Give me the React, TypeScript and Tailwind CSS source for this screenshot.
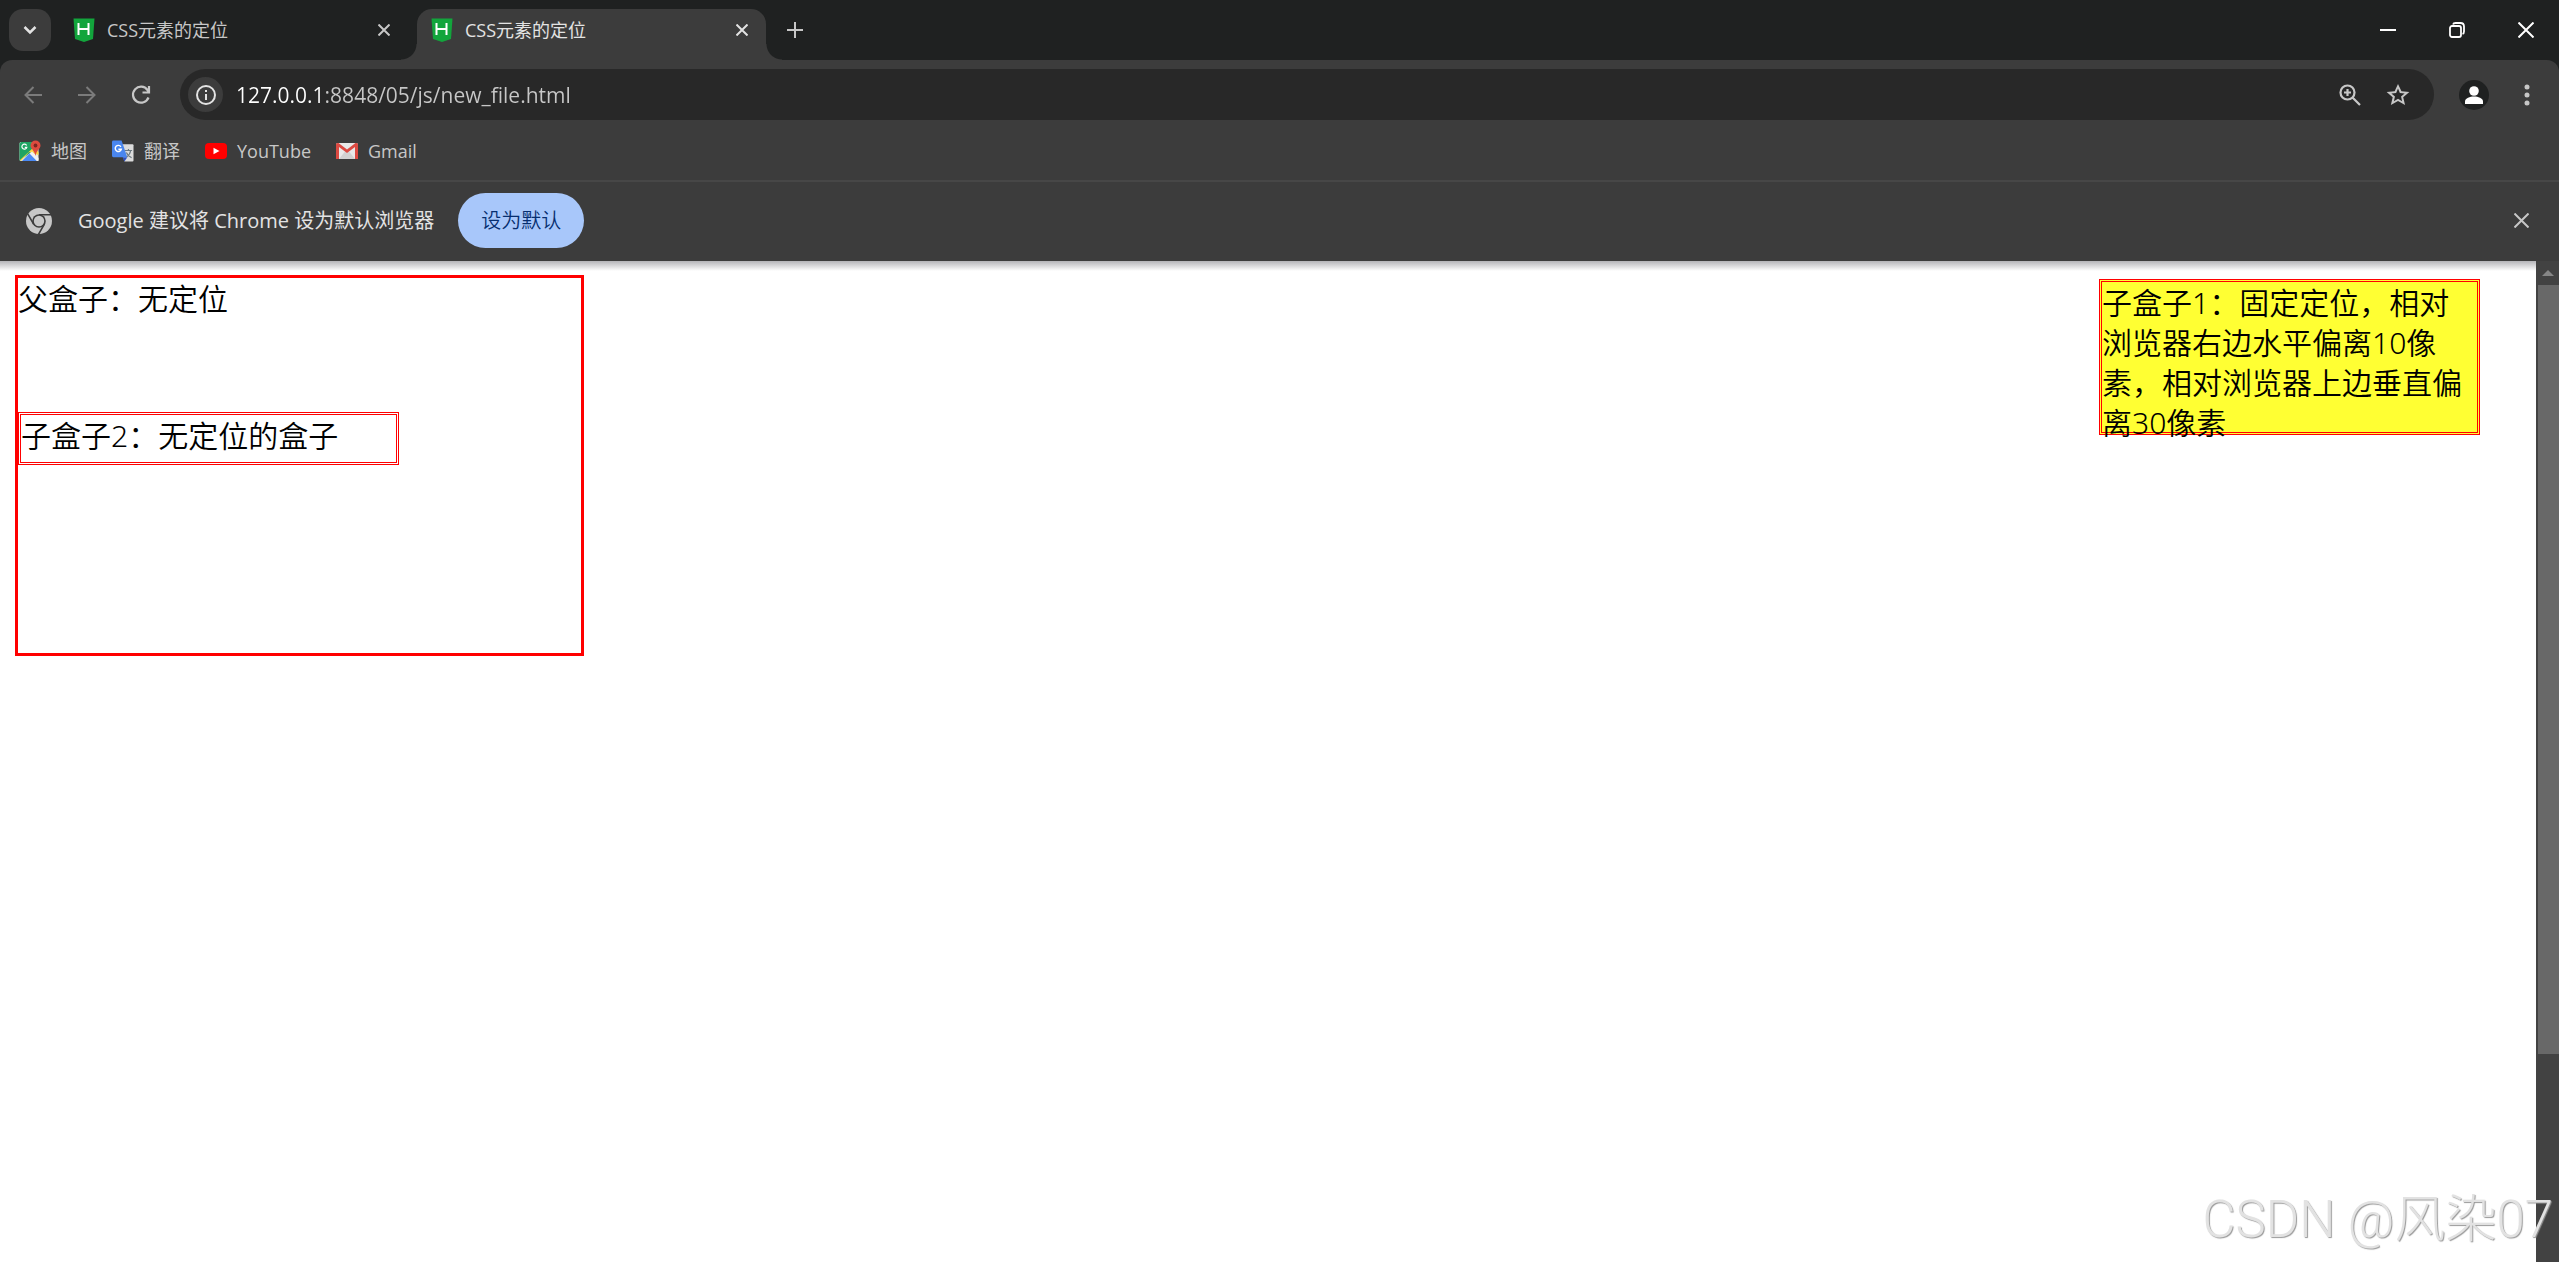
import { useState } from "react";
import type { ReactNode } from "react";

const TABS = [
  { id: "first", title: "CSS元素的定位" },
  { id: "second", title: "CSS元素的定位" },
];

const BOOKMARKS = [
  { label: "地图", icon: <MapsIcon /> },
  { label: "翻译", icon: <TranslateIcon /> },
  { label: "YouTube", icon: <YouTubeIcon /> },
  { label: "Gmail", icon: <GmailIcon /> },
];

function HBuilderIcon() {
  return (
    <svg width="22" height="24" viewBox="0 0 22 24">
      <path d="M0.500 0.500H21.500L20 21L11 24L2 21Z" fill="#12a53c" />
      <path d="M5.500 5V17M15.500 5V17M5.500 11H15.500" stroke="#fff" strokeWidth="2" />
    </svg>
  );
}

function MapsIcon() {
  return (
    <svg width="22" height="24" viewBox="0 0 22 24">
      <rect x="0.500" y="3" width="19" height="19" rx="1.500" fill="#e8e8e8" />
      <path d="M2 3H14L15 11L1 21.500H0.500V4.500Z" fill="#1fa463" />
      <path d="M1 21L15 8L19.500 13V16L10 13L2 22Z" fill="#fdd643" />
      <path d="M3 22L10.500 14.500L18 22Z" fill="#4a89f3" />
      <path d="M11 14.500L13 12.500L19.500 19V22H18Z" fill="#f1f1f1" />
      <path d="M7.600 6.500A2.500 2.500 0 1 0 7.800 8.300H5.800" fill="none" stroke="#fff" strokeWidth="1.200" />
      <path d="M16.500 1.500A5 5 0 0 0 11.500 6.500C11.500 10 15.500 11 16.500 17C17.500 11 21.500 10 21.500 6.500A5 5 0 0 0 16.500 1.500Z" fill="#de4b3e" />
      <circle cx="16.500" cy="6.500" r="1.900" fill="#7d2621" />
    </svg>
  );
}

function TranslateIcon() {
  return (
    <svg width="22" height="24" viewBox="0 0 23 24">
      <path d="M8 5H21.500A1 1 0 0 1 22.500 6V22A1 1 0 0 1 21.500 23H13Z" fill="#dcdcdc" />
      <path d="M11 18.500H16L13 23Z" fill="#2d4fc0" />
      <path d="M1.500 1H10L16 18.500H1.500A1.500 1.500 0 0 1 0 17V2.500A1.500 1.500 0 0 1 1.500 1Z" fill="#4a86ee" />
      <path d="M9.300 7.600A3.200 3.200 0 1 0 9.700 10.200H6.700" fill="none" stroke="#fff" strokeWidth="1.500" />
      <path d="M13.500 11.500H21M17.200 10V11.500M19.500 11.500C19 15 17 17 15.500 18M15 13.500C16 16 18.500 18 20.500 19" fill="none" stroke="#6b7880" strokeWidth="1.200" />
    </svg>
  );
}

function YouTubeIcon() {
  return (
    <svg width="22" height="24" viewBox="0 0 22 24">
      <rect y="4" width="22" height="16" rx="4" fill="#f00" />
      <path d="M8.500 8.800L14.500 12L8.500 15.200Z" fill="#fff" />
    </svg>
  );
}

function GmailIcon() {
  return (
    <svg width="22" height="24" viewBox="0 0 22 24">
      <rect y="4" width="22" height="16" rx="1.500" fill="#e9e9e9" />
      <path d="M3 20L9 12.500L11 14L13 12.500L19 20Z" fill="#d2d2d2" />
      <path d="M0 20V5.500Q0 4 1.500 4H2.500L11 10.500L19.500 4H20.500Q22 4 22 5.500V20H19V8L11 14L3 8V20Z" fill="#dc4a42" />
    </svg>
  );
}

function ChromeIcon() {
  return (
    <svg width="26" height="26" viewBox="0 0 26 26">
      <circle cx="13" cy="13" r="13" fill="#c7c7c7" />
      <circle cx="13" cy="13" r="6.800" fill="#3c3c3c" />
      <path
        d="M13 6.800H25M18.400 16.100L12.400 26.500M7.600 16.100L1.600 5.700"
        stroke="#3c3c3c"
        strokeWidth="1.600"
      />
      <circle cx="13" cy="13" r="5.200" fill="#c7c7c7" />
    </svg>
  );
}

function CloseIcon({ size = 12, width = 2 }: { size?: number; width?: number }) {
  return (
    <svg width={size} height={size} viewBox={`0 0 ${size} ${size}`} stroke="currentColor" strokeWidth={width}>
      <path d={`M0.500 0.500L${size - 0.5} ${size - 0.5}M${size - 0.5} 0.500L0.500 ${size - 0.5}`} />
    </svg>
  );
}

function IconButton({ label, className, children }: { label: string; className?: string; children: ReactNode }) {
  return (
    <button
      type="button"
      aria-label={label}
      className={`flex shrink-0 items-center justify-center rounded-full ${className ?? ""}`}
    >
      {children}
    </button>
  );
}

function TabStrip() {
  const [active, setActive] = useState("second");

  return (
    <header className="flex h-[60px] bg-[#1f2121] pl-[9px] pt-[9px]">
      <button
        type="button"
        aria-label="搜索标签页"
        className="flex size-[42px] items-center justify-center rounded-[14px] bg-[#3c3c3c] text-[#e3e3e3]"
      >
        <svg width="14" height="10" viewBox="0 0 14 10" fill="none" stroke="currentColor" strokeWidth="2.500">
          <path d="M1.500 2L7 7.500L12.500 2" />
        </svg>
      </button>

      <div className="ml-2 flex gap-[9px]">
        {TABS.map((tab) => {
          const selected = tab.id === active;
          return (
            <div
              key={tab.id}
              className={
                selected
                  ? "relative flex w-[349px] rounded-t-[15px] bg-[#3c3c3c] pb-[9px] pl-[14px] pr-2 text-[#e3e3e3]"
                  : "relative flex w-[349px] pb-[9px] pl-[14px] pr-2 text-[#c7c7c7]"
              }
            >
              {selected && (
                <>
                  {/* flared feet of the selected tab */}
                  <span className="absolute -left-4 bottom-0 size-4 bg-[radial-gradient(circle_at_0_0,#1f2121_15px,#3c3c3c_16px)]" />
                  <span className="absolute -right-4 bottom-0 size-4 bg-[radial-gradient(circle_at_100%_0,#1f2121_15px,#3c3c3c_16px)]" />
                </>
              )}
              <button
                type="button"
                onClick={() => setActive(tab.id)}
                className="flex flex-1 items-center gap-3 text-left text-[18px] leading-6"
              >
                <HBuilderIcon />
                <span>{tab.title}</span>
              </button>
              <IconButton label="关闭标签页" className="w-8">
                <CloseIcon />
              </IconButton>
            </div>
          );
        })}
      </div>

      <IconButton label="打开新的标签页" className="ml-2 size-[42px] text-[#c7c7c7]">
        <svg width="16" height="16" viewBox="0 0 16 16" stroke="currentColor" strokeWidth="2">
          <path d="M8 0V16M0 8H16" />
        </svg>
      </IconButton>

      <div className="ml-auto flex gap-[3px] pb-[10px] text-white">
        <IconButton label="最小化" className="w-[66px]">
          <svg width="16" height="16" viewBox="0 0 16 16" stroke="currentColor" strokeWidth="2">
            <path d="M0 8H16" />
          </svg>
        </IconButton>
        <IconButton label="还原" className="w-[66px]">
          <svg width="16" height="16" viewBox="0 0 16 16" fill="none" stroke="currentColor" strokeWidth="1.800">
            <rect x="1" y="4" width="11" height="11" rx="2" />
            <path d="M4 2.500Q4.500 1 6.500 1H11.500Q15 1 15 4.500V9.500Q15 11.500 13.500 12" />
          </svg>
        </IconButton>
        <IconButton label="关闭" className="w-[66px]">
          <CloseIcon size={16} />
        </IconButton>
      </div>
    </header>
  );
}

function Toolbar() {
  return (
    <div className="bg-[#1f2121]">
      <div className="flex items-center rounded-t-xl bg-[#3c3c3c] pb-[9px] pl-[9px] pr-[11px] pt-[9px]">
        <nav className="flex gap-[6px] text-[#7b7b7b]">
          <IconButton label="后退" className="size-12">
            <svg width="18" height="18" viewBox="0 0 18 18" fill="none" stroke="currentColor" strokeWidth="2">
              <path d="M18 9H2M9.500 1L1.500 9L9.500 17" />
            </svg>
          </IconButton>
          <IconButton label="前进" className="size-12">
            <svg width="18" height="18" viewBox="0 0 18 18" fill="none" stroke="currentColor" strokeWidth="2">
              <path d="M0 9H16M8.500 1L16.500 9L8.500 17" />
            </svg>
          </IconButton>
          <IconButton label="重新加载" className="size-12 text-[#c7c7c7]">
            <svg width="20" height="20" viewBox="0 0 20 20" fill="none" stroke="currentColor" strokeWidth="2.200">
              <path d="M17.500 12.500A8 8 0 1 1 16.500 5L18 7M18 1V7.500H11.500" />
            </svg>
          </IconButton>
        </nav>

        <form className="ml-[15px] flex h-[51px] flex-1 items-center rounded-full bg-[#282828] pl-2 pr-3 text-[#c7c7c7]">
          <IconButton label="查看网站信息" className="size-[35px] bg-[#3c3c3c] text-[#e3e3e3]">
            <svg width="20" height="20" viewBox="0 0 20 20" fill="none" stroke="currentColor" strokeWidth="2">
              <circle cx="10" cy="10" r="9" />
              <path d="M10 9V15M10 5V7" />
            </svg>
          </IconButton>
          <input
            type="text"
            aria-label="地址和搜索栏"
            defaultValue="127.0.0.1:8848/05/js/new_file.html"
            className="ml-[13px] h-8 flex-1 bg-[linear-gradient(90deg,#ffffff_89px,#c7c7c7_89px)] bg-clip-text text-[21px] text-transparent outline-none"
          />
          <IconButton label="缩放" className="size-12">
            <svg width="22" height="22" viewBox="0 0 22 22" fill="none" stroke="currentColor" strokeWidth="2.200">
              <circle cx="8.500" cy="8.500" r="7" />
              <path d="M13.500 13.500L21 21M8.500 5V12M5 8.500H12" />
            </svg>
          </IconButton>
          <IconButton label="为此标签页添加书签" className="size-12">
            <svg width="26" height="26" viewBox="0 0 24 24" fill="currentColor">
              <path d="M22.500 9.200l-7.300-.6L12 1.800 8.900 8.600l-7.400.6 5.600 4.800-1.700 7.300L12 17.500l6.500 3.800-1.700-7.200 5.700-4.900zM12 15.400l-3.800 2.300 1-4.300-3.300-2.900 4.400-.4L12 6.100l1.700 4 4.400.4-3.300 2.900 1 4.300L12 15.400z" />
            </svg>
          </IconButton>
        </form>

        <IconButton label="个人资料" className="ml-[25px] size-[30px] bg-[#1f2121] text-white">
          <svg width="18" height="18" viewBox="0 0 18 18" fill="currentColor">
            <circle cx="9" cy="5" r="4.800" />
            <path d="M0 18V15.500C0 12 5 10.500 9 10.500S18 12 18 15.500V18Z" />
          </svg>
        </IconButton>
        <IconButton label="自定义及控制" className="ml-4 h-12 w-[43px] text-[#c7c7c7]">
          <svg width="6" height="22" viewBox="0 0 6 22" fill="currentColor">
            <circle cx="3" cy="3" r="2.500" />
            <circle cx="3" cy="11" r="2.500" />
            <circle cx="3" cy="19" r="2.500" />
          </svg>
        </IconButton>
      </div>
    </div>
  );
}

function BookmarksBar() {
  return (
    <nav aria-label="书签" className="flex h-[53px] items-center gap-[25px] border-b-2 border-[#474747] bg-[#3c3c3c] pb-2 pl-[19px] text-[#c7c7c7]">
      {BOOKMARKS.map((b) => (
        <a key={b.label} href="#" className="flex items-center gap-[10px] text-[18px] leading-6">
          {b.icon}
          {b.label}
        </a>
      ))}
    </nav>
  );
}

function DefaultBrowserBar() {
  const [open, setOpen] = useState(true);
  if (!open) return null;

  return (
    <div className="flex h-[79px] items-center bg-[#3c3c3c] pb-[2px] pl-[26px] pr-[30px] text-[20px] leading-7 text-[#e3e3e3]">
      <ChromeIcon />
      <p className="ml-[26px]">Google 建议将 Chrome 设为默认浏览器</p>
      <button type="button" className="ml-6 h-[55px] rounded-full bg-[#a8c7fa] px-[23px] font-[350] text-[#062e6f]">
        设为默认
      </button>
      <button type="button" aria-label="关闭" onClick={() => setOpen(false)} className="ml-auto text-[#c7c7c7]">
        <CloseIcon size={15} />
      </button>
    </div>
  );
}

function Page() {
  return (
    <main className="flex flex-1 items-start justify-between bg-white bg-[linear-gradient(#b4b4b8,#ffffff_10px)] pl-[15px] pr-14 pt-[14px] font-['Noto_Sans','Noto_Sans_CJK_SC',sans-serif] text-[30px] font-[350] leading-10 text-black">
      <section className="h-[381px] w-[569px] border-3 border-[#ff0000]">
        <p className="pt-px">父盒子：无定位</p>
        <div className="mt-[93px] h-[53px] w-[381px] border-3 border-double border-[#ff0000] pt-px">
          子盒子2：无定位的盒子
        </div>
      </section>
      <aside className="mt-1 h-[156px] w-[381px] border-3 border-double border-[#ff0000] bg-[#ffff33] pt-px">
        子盒子1：固定定位，相对浏览器右边水平偏离10像素，相对浏览器上边垂直偏离30像素
      </aside>
    </main>
  );
}

function Scrollbar() {
  return (
    <div className="flex w-[23px] flex-col bg-[#424242]">
      <div className="flex h-6 items-center justify-center">
        <svg width="12" height="6" viewBox="0 0 12 6" fill="#868686">
          <path d="M6 0L12 6H0Z" />
        </svg>
      </div>
      <div className="ml-[2px] h-[769px] bg-[#686868]" />
    </div>
  );
}

export default function App() {
  return (
    <div className="relative flex min-h-screen flex-col overflow-hidden font-['Open_Sans','Noto_Sans_CJK_SC',sans-serif]">
      <TabStrip />
      <Toolbar />
      <BookmarksBar />
      <DefaultBrowserBar />
      <div className="flex flex-1">
        <Page />
        <Scrollbar />
      </div>
      <p className="pointer-events-none absolute bottom-3 right-[6px] font-['Roboto','Noto_Sans_CJK_SC',sans-serif] text-[51px] font-light leading-[60px] text-[#e2e2e2] [text-shadow:1px_1px_1px_#999999]">
        CSDN @风染07
      </p>
    </div>
  );
}
